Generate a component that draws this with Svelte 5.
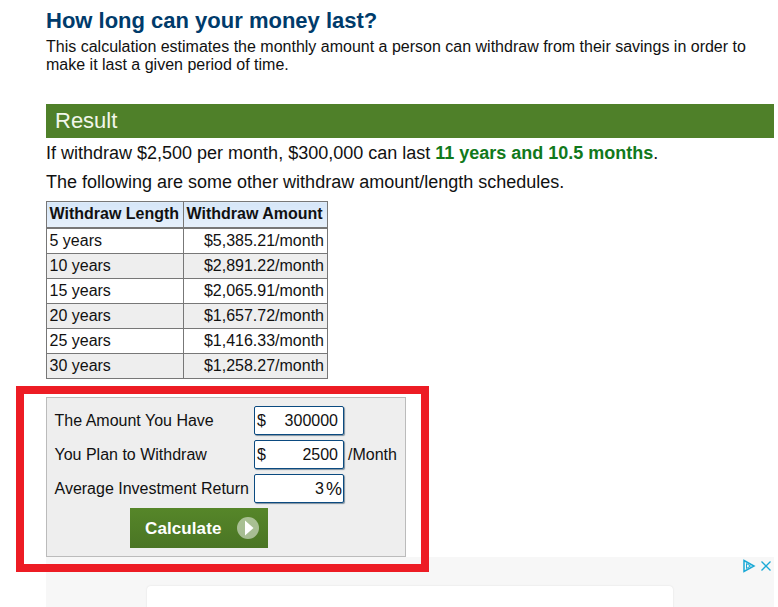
<script lang="ts">
  const rows = [
    ['5 years', '$5,385.21/month'],
    ['10 years', '$2,891.22/month'],
    ['15 years', '$2,065.91/month'],
    ['20 years', '$1,657.72/month'],
    ['25 years', '$1,416.33/month'],
    ['30 years', '$1,258.27/month'],
  ];
</script>

<div class="page">
  <h2>How long can your money last?</h2>
  <p class="intro">This calculation estimates the monthly amount a person can withdraw from their savings in order to make it last a given period of time.</p>

  <h3 class="result-bar">Result</h3>
  <p class="line first">If withdraw $2,500 per month, $300,000 can last <b>11 years and 10.5 months</b>.</p>
  <p class="line">The following are some other withdraw amount/length schedules.</p>

  <table class="schedule">
    <colgroup><col class="c1" /><col /></colgroup>
    <thead>
      <tr><th>Withdraw Length</th><th>Withdraw Amount</th></tr>
    </thead>
    <tbody>
      {#each rows as r}
        <tr><td>{r[0]}</td><td class="num">{r[1]}</td></tr>
      {/each}
    </tbody>
  </table>

  <form class="panel" onsubmit={(e) => e.preventDefault()}>
    <div class="row">
      <span class="lbl">The Amount You Have</span>
      <label class="field"><span class="pre">$</span><input value="300000" /></label>
    </div>
    <div class="row">
      <span class="lbl">You Plan to Withdraw</span>
      <label class="field"><span class="pre">$</span><input value="2500" /></label>
      <span class="unit">/Month</span>
    </div>
    <div class="row">
      <span class="lbl">Average Investment Return</span>
      <label class="field pct"><input value="3" /><span class="post">%</span></label>
    </div>
    <button class="calc" type="submit">
      <span class="calc-text">Calculate</span>
      <svg width="22" height="22" viewBox="0 0 22 22" aria-hidden="true">
        <circle cx="11" cy="11" r="11" fill="#fff" fill-opacity=".5" />
        <path d="M8 3.500 16.500 11 8 18.500z" fill="#fff" />
      </svg>
    </button>
  </form>

  <div class="ad">
    <div class="ad-marks">
      <svg width="14" height="14" viewBox="0 0 14 14" fill="none" stroke="#1ba9d6" stroke-width="1.500" aria-hidden="true">
        <path d="M2 1.500 12 7 2 12.500z" />
        <path d="M4.500 4.500 8.500 7 4.500 9.500z" stroke-width="1" />
      </svg>
      <svg width="12" height="12" viewBox="0 0 12 12" fill="none" stroke="#1ba9d6" stroke-width="1.300" aria-hidden="true">
        <path d="M1.500 1.500 10.500 10.500M10.500 1.500 1.500 10.500" />
      </svg>
    </div>
    <div class="ad-card"></div>
  </div>
</div>

<!-- annotation drawn over the form -->
<div class="mark"></div>

<style>
  :global(body) { margin: 0; background: #fff; }
  .page {
    position: relative;
    box-sizing: border-box;
    width: 774px; height: 607px;
    overflow: hidden;
    padding: 8px 0 0 46px;
    font: 16px/18px "Liberation Sans", Arial, sans-serif;
    color: #111;
  }
  h2 {
    margin: 0;
    font: 700 22px/26px "Liberation Sans", Arial, sans-serif;
    color: #003b6b;
  }
  .intro { margin: 4px 0 0; width: 715px; }
  .result-bar {
    margin: 30px 0 0;
    height: 34px;
    padding-left: 9px;
    background: #4f8029;
    color: #f2f7ea;
    font: 400 22px/34px "Liberation Sans", Arial, sans-serif;
  }
  .line { margin: 0; height: 29px; line-height: 29px; font-size: 18px; }
  .line.first { margin-top: 1px; }
  .line b { color: #11791b; }
  .schedule {
    margin-top: 4px;
    border-collapse: collapse;
    table-layout: fixed;
    width: 282px;
    font-size: 16px;
    line-height: 18px;
  }
  .c1 { width: 137px; }
  th, td { border: 1px solid #777; padding: 3px 3px 3px 2.500px; }
  th {
    height: 19px;
    padding-top: 2px; padding-bottom: 4px;
    font-weight: 700;
    text-align: left;
    background: linear-gradient(#d6e6f8, #e6f0fb);
    border-bottom-width: 2px;
    white-space: nowrap;
  }
  td { height: 18px; }
  tbody tr:nth-child(even) td { background: #eee; }
  td.num { text-align: right; }
  .panel {
    box-sizing: border-box;
    width: 360px; height: 160px;
    margin-top: 18px;
    padding: 8px 8px 0 7.500px;
    background: #eee;
    border: 1px solid #bbb;
    display: flex; flex-direction: column; gap: 5px;
  }
  .row { display: flex; align-items: center; height: 29px; }
  .lbl { width: 199.500px; flex: none; white-space: nowrap; }
  .field {
    box-sizing: border-box;
    width: 90px; height: 29px;
    display: flex; align-items: center;
    padding: 0 5px 0 2px;
    background: #fff;
    border: 1px solid #0b4a80;
    border-radius: 2px;
    box-shadow: 1px 1px 1px #7d8f9e;
  }
  .field input {
    flex: 1; min-width: 0;
    border: 0; padding: 0; outline: 0; background: none;
    text-align: right;
    font: 16px "Liberation Sans", Arial, sans-serif;
    color: #111;
  }
  .pct { padding-right: 1px; }
  .post { margin-left: 2px; font-size: 18px; }
  .unit { margin-left: 4px; }
  .calc {
    align-self: flex-start;
    margin: 0 0 0 75.500px;
    width: 138px; height: 40px;
    display: flex; align-items: center; justify-content: space-between;
    padding: 0 9px 0 15px;
    border: 0;
    background: linear-gradient(#568629, #4a7524);
    color: #fff;
    font: 700 17px "Liberation Sans", Arial, sans-serif;
    letter-spacing: .1px;
  }
  .calc-text { margin-top: 2px; }
  .ad {
    position: absolute;
    left: 46px; right: 0; top: 557px; bottom: 0;
    background: #f7f7f7;
  }
  .ad-marks {
    position: absolute; right: 2px; top: 2px;
    display: flex; align-items: center; gap: 4px;
  }
  .ad-card {
    position: absolute;
    left: 101px; top: 29px; width: 526px; height: 40px;
    background: #fff;
    border-radius: 4px;
    box-shadow: 0 0 2px #ddd;
  }
  .mark {
    position: absolute;
    left: 16px; top: 386px;
    width: 413px; height: 186px;
    box-sizing: border-box;
    border: 8px solid #ed1c24;
  }
</style>
